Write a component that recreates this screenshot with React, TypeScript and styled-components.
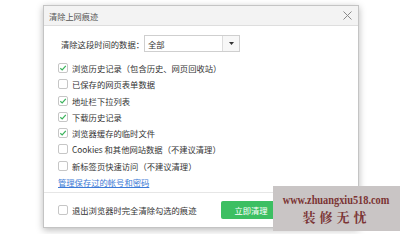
import React from "react";
import styled, { createGlobalStyle } from "styled-components";

const Global = createGlobalStyle`
  html, body { margin: 0; padding: 0; background: #ffffff; }
  body { width: 400px; height: 234px; overflow: hidden; position: relative;
    font-family: "Noto Sans CJK SC", "Noto Sans", sans-serif; color: #333; }
`;

const Page = styled.div`
  width: 400px;
  height: 234px;
  padding: 5px 0 0 43px;
  box-sizing: border-box;
  position: relative;
`;

const Dialog = styled.div`
  width: 316px;
  height: 223px;
  box-sizing: border-box;
  border: 1px solid #c4c4c4;
  background: #fff;
  box-shadow: 0 2px 7px rgba(0, 0, 0, 0.28);
  display: flex;
  flex-direction: column;
`;

const TitleBar = styled.div`
  height: 19px;
  flex: none;
  background: #f3f3f3;
  border-bottom: 1px solid #dedede;
  display: flex;
  align-items: center;
  justify-content: space-between;
  padding: 0 6px 0 5px;
`;

const Title = styled.span`
  font-size: 8.2px;
  color: #555;
`;

const Close = styled.svg`
  width: 9px;
  height: 9px;
`;

const Body = styled.div`
  flex: 1;
  padding: 9px 0 0 14px;
  display: flex;
  flex-direction: column;
`;

const RangeRow = styled.div`
  display: flex;
  align-items: center;
  padding-left: 3px;
  height: 17px;
  margin-bottom: 8px;
`;

const Label = styled.span`
  font-size: 8.3px;
  width: 83px;
  color: #333;
`;

const Select = styled.div`
  width: 96px;
  height: 17px;
  box-sizing: border-box;
  border: 1px solid #cfcfcf;
  display: flex;
  align-items: center;
  font-size: 8.3px;
`;

const SelectValue = styled.span`
  flex: 1;
  padding-left: 3px;
`;

const SelectArrow = styled.div`
  width: 16px;
  height: 100%;
  border-left: 1px solid #dcdcdc;
  background: #f7f7f7;
  display: flex;
  align-items: center;
  justify-content: center;
`;

const Row = styled.label`
  display: flex;
  align-items: center;
  height: 16.25px;
  font-size: 8.3px;
  color: #333;
`;

const Box = styled.span<{ $checked?: boolean }>`
  width: 10px;
  height: 10px;
  box-sizing: border-box;
  border: 1px solid #c6c6c6;
  border-radius: 2px;
  background: #fff;
  margin-right: 4px;
  display: flex;
  align-items: center;
  justify-content: center;
  flex: none;
`;

const Link = styled.a`
  font-size: 8.3px;
  color: #3c7ad6;
  text-decoration: underline;
  height: 16px;
  display: flex;
  align-items: center;
`;

const Footer = styled.div`
  height: 34px;
  flex: none;
  border-top: 1px solid #e6e6e6;
  display: flex;
  align-items: center;
  padding: 0 0 0 14px;
`;

const FooterLabel = styled(Row)`
  flex: 1;
`;

const Button = styled.button`
  width: 60px;
  height: 18px;
  border: none;
  border-radius: 2px;
  background: #3cbf62;
  color: #fff;
  font-size: 8.3px;
  font-family: "Noto Sans CJK SC", sans-serif;
  margin-right: 77px;
  padding: 0;
`;

const Watermark = styled.div`
  position: absolute;
  left: 273px;
  top: 186px;
  width: 127px;
  height: 45px;
  background: #c9c5c5;
  display: flex;
  flex-direction: column;
  align-items: center;
  justify-content: center;
  color: #7b3434;
  font-family: "Liberation Serif", "Noto Serif CJK SC", serif;
  font-weight: bold;
`;

const WmUrl = styled.div`
  font-size: 12px;
  line-height: 15px;
  transform: scaleX(0.86);
  white-space: nowrap;
`;

const WmName = styled.div`
  font-size: 13px;
  line-height: 17px;
  letter-spacing: 4px;
  font-family: "Noto Serif CJK SC", "Noto Sans CJK SC", serif;
`;

const Check = () => (
  <svg width="8" height="8" viewBox="0 0 8 8">
    <path d="M1.3 4.2 L3.2 6 L6.8 1.8" fill="none" stroke="#3bb35c" strokeWidth="1.2" />
  </svg>
);

const items: [string, boolean][] = [
  ["浏览历史记录（包含历史、网页回收站）", true],
  ["已保存的网页表单数据", false],
  ["地址栏下拉列表", true],
  ["下载历史记录", true],
  ["浏览器缓存的临时文件", true],
  ["Cookies 和其他网站数据（不建议清理）", false],
  ["新标签页快速访问（不建议清理）", false],
];

export default function App() {
  return (
    <Page>
      <Global />
      <Dialog>
        <TitleBar>
          <Title>清除上网痕迹</Title>
          <Close viewBox="0 0 9 9">
            <path d="M0.5 0.5 L8.5 8.5 M8.5 0.5 L0.5 8.5" stroke="#8a8a8a" strokeWidth="1" />
          </Close>
        </TitleBar>
        <Body>
          <RangeRow>
            <Label>清除这段时间的数据：</Label>
            <Select>
              <SelectValue>全部</SelectValue>
              <SelectArrow>
                <svg width="5" height="3" viewBox="0 0 5 3">
                  <path d="M0 0 L5 0 L2.5 3 Z" fill="#333" />
                </svg>
              </SelectArrow>
            </Select>
          </RangeRow>
          {items.map(([t, c]) => (
            <Row key={t}>
              <Box $checked={c}>{c && <Check />}</Box>
              {t}
            </Row>
          ))}
          <Link>管理保存过的帐号和密码</Link>
        </Body>
        <Footer>
          <FooterLabel>
            <Box />
            退出浏览器时完全清除勾选的痕迹
          </FooterLabel>
          <Button>立即清理</Button>
        </Footer>
      </Dialog>
      <Watermark>
        <WmUrl>www.zhuangxiu518.com</WmUrl>
        <WmName>装修无忧</WmName>
      </Watermark>
    </Page>
  );
}
